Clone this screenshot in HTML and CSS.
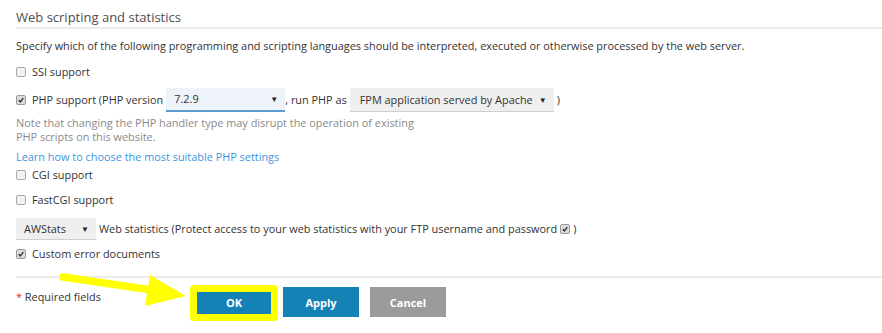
FILE: index.html
```html
<!DOCTYPE html>
<html lang="en">
<head>
  <meta charset="UTF-8">
  <title>Web scripting and statistics</title>
  <link rel="stylesheet" href="styles.css">
</head>
<body>
<div class="page">
  <div class="section">
    <h2 class="section-title">Web scripting and statistics</h2>
    <p class="hint">Specify which of the following programming and scripting languages should be interpreted, executed or otherwise processed by the web server.</p>

    <div class="row row-ssi"><span class="checkbox"></span><span>SSI support</span></div>

    <div class="row row-php">
      <span class="checkbox checked"><svg viewBox="0 0 10 10"><path d="M2.2 5.2 L4.2 7.4 L7.9 2.6"/></svg></span>
      <span>PHP support (PHP version</span>
      <span class="select select-version">7.2.9<span class="caret">&#9660;</span></span>
      <span>, run PHP as</span>
      <span class="select select-handler">FPM application served by Apache<span class="caret">&#9660;</span></span>
      <span class="close">)</span>
    </div>

    <p class="note">Note that changing the PHP handler type may disrupt the operation of existing<br>PHP scripts on this website.</p>
    <a class="link" href="#">Learn how to choose the most suitable PHP settings</a>

    <div class="row row-cgi"><span class="checkbox"></span><span>CGI support</span></div>
    <div class="row row-fastcgi"><span class="checkbox"></span><span>FastCGI support</span></div>

    <div class="row row-stats">
      <span class="select select-stats">AWStats<span class="caret">&#9660;</span></span>
      <span class="stats-text">Web statistics (Protect access to your web statistics with your FTP username and password</span>
      <span class="checkbox checked inline"><svg viewBox="0 0 10 10"><path d="M2.2 5.2 L4.2 7.4 L7.9 2.6"/></svg></span>
      <span>)</span>
    </div>

    <div class="row row-errors"><span class="checkbox checked"><svg viewBox="0 0 10 10"><path d="M2.2 5.2 L4.2 7.4 L7.9 2.6"/></svg></span><span>Custom error documents</span></div>
  </div>

  <div class="footer">
    <div class="required"><span class="star">*</span> Required fields</div>
    <div class="buttons">
      <span class="btn-wrap">
        <button class="btn btn-primary">OK</button>
        <span class="highlight"></span>
      </span>
      <button class="btn btn-primary">Apply</button>
      <button class="btn btn-cancel">Cancel</button>
    </div>
  </div>

  <!-- annotation arrow pointing at OK -->
  <svg class="arrow" width="882" height="333" viewBox="0 0 882 333">
    <line x1="63" y1="277" x2="152" y2="290" stroke="#ffff00" stroke-width="7.5" stroke-linecap="round"/>
    <polygon points="150,275 145,306 186,296" fill="#ffff00"/>
  </svg>
</div>
</body>
</html>
```

FILE: styles.css
```css
* {
  margin: 0;
  padding: 0;
  box-sizing: border-box;
}

body {
  font-family: 'Open Sans', 'Liberation Sans', sans-serif;
  font-size: 10.9px;
  color: #333;
  background: #fff;
}

.page {
  position: relative;
  width: 882px;
  height: 333px;
  padding-left: 16px;
  overflow: hidden;
}

.section-title {
  margin-top: 7px;
  font-size: 13px;
  font-weight: normal;
  line-height: 20px;
  color: #4d4d4d;
  border-bottom: 2px solid #ebebeb;
}

.hint {
  margin-top: 9px;
  line-height: 16px;
}

.row {
  display: flex;
  align-items: center;
  line-height: 16px;
  white-space: nowrap;
}

.row-ssi { margin-top: 10px; }
.row-php { margin-top: 8px; height: 24px; }
.row-cgi { margin-top: 2px; }
.row-fastcgi { margin-top: 9px; }
.row-stats { margin-top: 10px; height: 22px; }
.row-errors { margin-top: 6px; }

.checkbox {
  display: inline-flex;
  width: 10px;
  height: 10px;
  margin-right: 6px;
  border: 1px solid #a9a9a9;
  border-radius: 2px;
  background: #f2f2f2;
  flex-shrink: 0;
}

.checkbox.checked {
  background: #dcdcdc;
  border-color: #9a9a9a;
}

.checkbox svg {
  width: 8px;
  height: 8px;
}

.checkbox svg path {
  fill: none;
  stroke: #333;
  stroke-width: 1.8;
}

.checkbox.inline {
  margin: 0 3px 0 3px;
}

.select {
  position: relative;
  display: inline-flex;
  align-items: center;
  height: 100%;
  padding-left: 8px;
  background: #efefef;
  border-bottom: 1px solid #cfcfcf;
}

.select-version {
  width: 119px;
  margin: 0 0 0 3px;
  background: #edf3f8;
  border-bottom: 2px solid #5c9bd1;
}

.select-handler {
  width: 204px;
  margin: 0 0 0 3px;
  padding-left: 10px;
}

.close {
  margin-left: 3px;
}

.select-stats {
  width: 80px;
  padding-left: 8px;
}

.stats-text {
  margin-left: 3px;
}

.caret {
  position: absolute;
  right: 7px;
  font-size: 8px;
  color: #222;
}

.note {
  margin-top: 4px;
  line-height: 14px;
  color: #8a8a8a;
}

.link {
  display: block;
  margin-top: 5px;
  line-height: 16px;
  color: #3d94dc;
  text-decoration: none;
}

.footer {
  display: flex;
  margin-top: 14px;
  padding-top: 9px;
  border-top: 2px solid #ebebeb;
}

.required {
  width: 180px;
  margin-top: 2px;
  line-height: 16px;
}

.star {
  color: #d9302c;
}

.buttons {
  display: flex;
  gap: 11px;
}

.btn-wrap {
  position: relative;
  display: flex;
}

.btn {
  width: 76px;
  height: 30px;
  border: none;
  font-family: 'Open Sans', 'Liberation Sans', sans-serif;
  font-size: 11px;
  font-weight: bold;
  color: #fff;
  cursor: pointer;
}

.btn-primary {
  background: #1582b6;
}

.btn-cancel {
  background: #9b9b9b;
}

.highlight {
  position: absolute;
  top: -2px;
  left: -6px;
  right: -6px;
  bottom: -4px;
  border: 7px solid #ffff00;
  border-radius: 4px;
}

.arrow {
  position: absolute;
  top: 0;
  left: 0;
  pointer-events: none;
}
```
